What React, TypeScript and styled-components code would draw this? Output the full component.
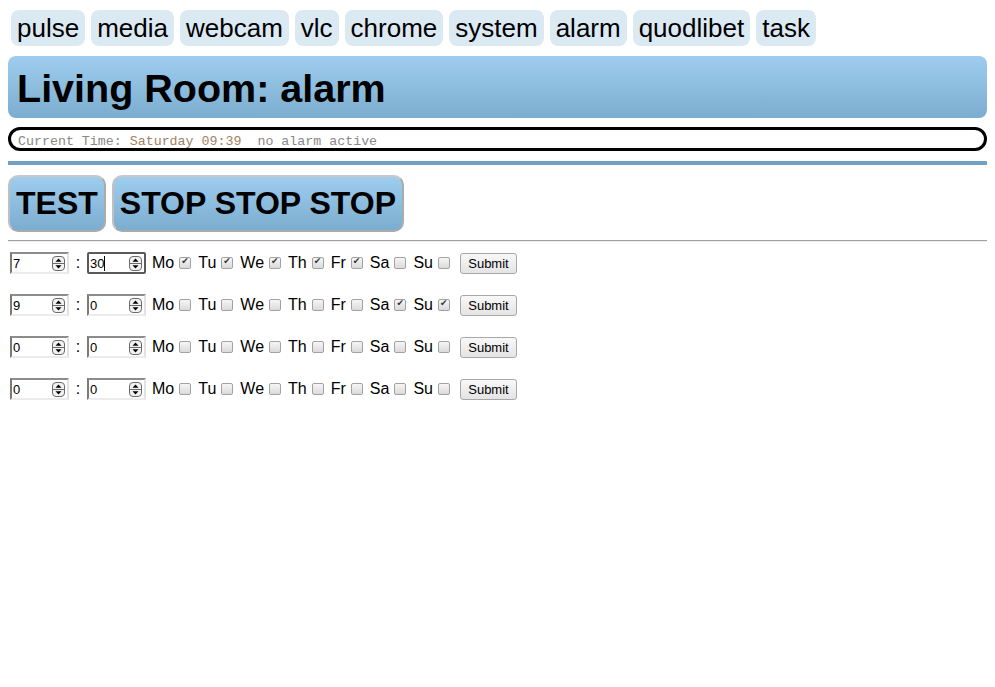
import * as React from "react";
import styled, { createGlobalStyle } from "styled-components";

const GlobalStyle = createGlobalStyle`
  body {
    margin: 8px;
    font-family: "Liberation Sans", Arial, sans-serif;
    background: #fff;
    color: #000;
  }
`;

const Tabs = styled.nav`
  display: flex;
  gap: 6px;
  margin: 2px 0 10px 3px;
`;

const Tab = styled.a`
  font-size: 26px;
  line-height: 30px;
  padding: 3px 6px;
  background: #dbe9f3;
  border-radius: 8px;
  color: #000;
  text-decoration: none;
`;

const Header = styled.h1`
  margin: 0 0 9px;
  height: 62px;
  padding-left: 9px;
  font-size: 39.5px;
  line-height: 64px;
  font-weight: bold;
  border-radius: 8px;
  background: linear-gradient(#9ecdee, #7badd0);
`;

const Status = styled.div`
  height: 15px;
  padding: 3px 0 0 7px;
  border: 3px solid #000;
  border-radius: 12px;
  font-family: "Liberation Mono", "Courier New", monospace;
  font-size: 13.3px;
  line-height: 18px;
  color: #888;
  white-space: pre;
  overflow: hidden;
  margin-bottom: 10px;
`;

const Time = styled.span`
  color: #a08262;
`;

const BlueLine = styled.div`
  height: 4px;
  background: #70a0c4;
  margin-bottom: 10px;
`;

const ButtonRow = styled.div`
  display: flex;
  gap: 6px;
  margin-bottom: 8px;
`;

const BigButton = styled.button`
  height: 57px;
  padding: 0 6px;
  font-family: "Liberation Sans", Arial, sans-serif;
  font-size: 32px;
  font-weight: bold;
  color: #000;
  border: 2px solid #ababab;
  border-top-color: #c8c8c8;
  border-left-color: #c0c0c0;
  border-radius: 10px;
  background: linear-gradient(#9ecdee, #7badd0);
`;

const Rule = styled.hr`
  margin: 0 0 10px;
  border: 0;
  border-top: 1px solid #a0a0a0;
  border-bottom: 1px solid #eee;
`;

const AlarmRow = styled.form`
  display: flex;
  align-items: center;
  height: 22px;
  margin: 0 0 20px 2px;
  font-size: 16px;
`;

const Field = styled.div<{ $focused?: boolean }>`
  box-sizing: border-box;
  display: flex;
  align-items: center;
  width: 59px;
  height: 22px;
  border: 2px solid;
  border-color: ${(p) =>
    p.$focused ? "#5a5a5a" : "#8c8c8c #e2e2e2 #ececec #7a7a7a"};
  border-radius: ${(p) => (p.$focused ? "2px" : "0")};
  background: #fff;
  padding: 0 2px 0 1px;
`;

const Value = styled.span`
  flex: 1;
  display: flex;
  align-items: center;
  font-size: 13px;
  line-height: 15px;
`;

const Caret = styled.span`
  display: inline-block;
  width: 1px;
  height: 15px;
  background: #000;
`;

const Colon = styled.span`
  width: 18px;
  text-align: center;
`;

const Day = styled.label`
  display: flex;
  align-items: center;
  margin-left: 6px;
  & + & {
    margin-left: 7px;
  }
`;

const Check = styled.input`
  appearance: none;
  box-sizing: border-box;
  width: 12px;
  height: 12px;
  margin: 0 0 0 5px;
  border: 1px solid #a2a2a2;
  border-radius: 2px;
  background: linear-gradient(#f6f6f6, #dadada);
  position: relative;
  &:checked::after {
    content: "✔";
    position: absolute;
    left: 1px;
    top: -2px;
    font-family: "DejaVu Sans", sans-serif;
    font-size: 9px;
    color: #333;
  }
`;

const Submit = styled.button`
  margin-left: 10px;
  width: 57px;
  height: 21px;
  padding: 0;
  font-family: "Liberation Sans", Arial, sans-serif;
  font-size: 13px;
  color: #000;
  border: 1px solid #a8a8a8;
  border-radius: 3px;
  background: linear-gradient(#f8f8f8, #e4e4e4);
`;

function Spinner() {
  return (
    <svg width="13" height="15" viewBox="0 0 13 15">
      <rect x="0.5" y="0.5" width="12" height="14" rx="3.5" fill="#f2f2f2" stroke="#6a6a6a" />
      <line x1="1" y1="7.5" x2="12" y2="7.5" stroke="#6a6a6a" />
      <path d="M6.5 2.5 L9.5 5.8 L3.5 5.8 Z" fill="#000" />
      <path d="M6.5 12.5 L9.5 9.2 L3.5 9.2 Z" fill="#000" />
    </svg>
  );
}

const days = ["Mo", "Tu", "We", "Th", "Fr", "Sa", "Su"];

const alarms = [
  { h: "7", m: "30", on: [1, 1, 1, 1, 1, 0, 0], focus: true },
  { h: "9", m: "0", on: [0, 0, 0, 0, 0, 1, 1] },
  { h: "0", m: "0", on: [0, 0, 0, 0, 0, 0, 0] },
  { h: "0", m: "0", on: [0, 0, 0, 0, 0, 0, 0] },
];

const tabs = ["pulse", "media", "webcam", "vlc", "chrome", "system", "alarm", "quodlibet", "task"];

export default function App() {
  return (
    <>
      <GlobalStyle />
      <Tabs>
        {tabs.map((t) => (
          <Tab key={t} href="#">
            {t}
          </Tab>
        ))}
      </Tabs>
      <Header>Living Room: alarm</Header>
      <Status>
        Current Time: <Time>Saturday 09:39</Time>  no alarm active
      </Status>
      <BlueLine />
      <ButtonRow>
        <BigButton>TEST</BigButton>
        <BigButton>STOP STOP STOP</BigButton>
      </ButtonRow>
      <Rule />
      {alarms.map((a, i) => (
        <AlarmRow key={i} onSubmit={(e) => e.preventDefault()}>
          <Field>
            <Value>{a.h}</Value>
            <Spinner />
          </Field>
          <Colon>:</Colon>
          <Field $focused={a.focus}>
            <Value>
              {a.m}
              {a.focus && <Caret />}
            </Value>
            <Spinner />
          </Field>
          {days.map((d, j) => (
            <Day key={d}>
              {d}
              <Check type="checkbox" defaultChecked={!!a.on[j]} />
            </Day>
          ))}
          <Submit type="submit">Submit</Submit>
        </AlarmRow>
      ))}
    </>
  );
}
